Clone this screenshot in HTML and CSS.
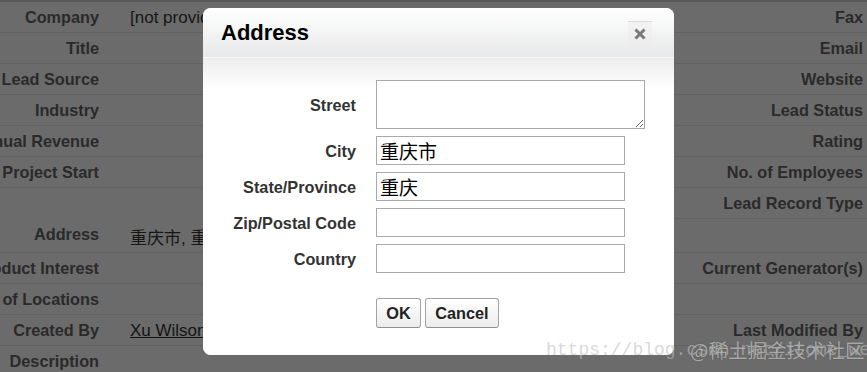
FILE: index.html
```html
<!DOCTYPE html>
<html>
<head>
<meta charset="utf-8">
<link rel="stylesheet" href="styles.css">
</head>
<body>
<div class="page">
  <div class="detail">
    <div class="lbl">Company</div><div class="val">[not provided]</div><div class="rlbl">Fax</div>
    <div class="lbl">Title</div><div class="val"></div><div class="rlbl">Email</div>
    <div class="lbl">Lead Source</div><div class="val"></div><div class="rlbl">Website</div>
    <div class="lbl">Industry</div><div class="val"></div><div class="rlbl">Lead Status</div>
    <div class="lbl">Annual Revenue</div><div class="val"></div><div class="rlbl">Rating</div>
    <div class="lbl">Project Start</div><div class="val"></div><div class="rlbl">No. of Employees</div>
    <div class="lbl nb"></div><div class="val nb"></div><div class="rlbl">Lead Record Type</div>
    <div class="lbl addr">Address</div><div class="val cjk">重庆市, 重庆</div><div class="rlbl"></div>
    <div class="lbl">Product Interest</div><div class="val"></div><div class="rlbl">Current Generator(s)</div>
    <div class="lbl">No. of Locations</div><div class="val"></div><div class="rlbl"></div>
    <div class="lbl">Created By</div><div class="val"><a class="link" href="#">Xu Wilson</a></div><div class="rlbl">Last Modified By</div>
    <div class="lbl">Description</div><div class="val"></div><div class="rlbl"></div>
  </div>

  <div class="dialog">
    <div class="dlg-head">
      <h2 class="dlg-title">Address</h2>
      <span class="dlg-close">
        <svg width="12" height="12" viewBox="0 0 12 12"><path d="M1.5 1.5 L10.5 10.5 M10.5 1.5 L1.5 10.5" stroke="#7a7a7a" stroke-width="3" stroke-linecap="butt"/></svg>
      </span>
    </div>
    <div class="dlg-body">
      <div class="form">
        <label class="flbl">Street</label><textarea class="ta"></textarea>
        <label class="flbl">City</label><input class="inp" type="text" value="重庆市">
        <label class="flbl">State/Province</label><input class="inp" type="text" value="重庆">
        <label class="flbl">Zip/Postal Code</label><input class="inp" type="text" value="">
        <label class="flbl">Country</label><input class="inp" type="text" value="">
        <div class="btns"><button class="btn ok">OK</button><button class="btn cancel">Cancel</button></div>
      </div>
    </div>
  </div>

  <div class="wm-url">https://blog.csdn.net/itome_web</div>
  <div class="wm-jj">@稀土掘金技术社区</div>
</div>
</body>
</html>
```
FILE: styles.css
```css
html, body {
  margin: 0;
  padding: 0;
  width: 867px;
  height: 372px;
  overflow: hidden;
  background: #6b6b6b;
}

.page {
  position: relative;
  width: 867px;
  height: 372px;
  overflow: hidden;
  font-family: "Liberation Sans", Arial, sans-serif;
}

.detail {
  display: grid;
  grid-template-columns: 110px 1fr 260px;
  grid-template-rows: repeat(7, 31px) 34px repeat(4, 31px);
  border-top: 2px solid #5a5a5a;
}

.lbl, .val, .rlbl {
  box-sizing: border-box;
  display: flex;
  align-items: center;
  padding-top: 1px;
  white-space: nowrap;
  border-bottom: 1px solid #626262;
  min-width: 0;
}

.lbl.nb, .val.nb { border-bottom-color: transparent; }

.lbl {
  justify-content: flex-end;
  padding-right: 11px;
  font-size: 16.25px;
  font-weight: bold;
  color: #2a2a2a;
}

.lbl.addr { padding-top: 0; padding-bottom: 3px; }

.rlbl {
  justify-content: flex-end;
  padding-right: 4px;
  font-size: 16.25px;
  font-weight: bold;
  color: #2a2a2a;
}

.val {
  padding-left: 20px;
  font-size: 17px;
  color: #161616;
  overflow: hidden;
}

.val.cjk {
  font-family: "Liberation Sans", "Noto Sans CJK SC", sans-serif;
  font-size: 17px;
  padding-top: 2px;
}

.link {
  color: #141414;
  text-decoration: underline;
}

/* dialog */
.dialog {
  position: absolute;
  left: 203px;
  top: 8px;
  width: 471px;
  height: 347px;
  background: #fff;
  border-radius: 8px;
  overflow: hidden;
}

.dlg-head {
  box-sizing: border-box;
  height: 50px;
  display: flex;
  align-items: center;
  justify-content: space-between;
  padding: 0 22px 0 18px;
  background: linear-gradient(#ffffff, #e7e8e9);
  border-bottom: 1px solid #f7f7f7;
}

.dlg-title {
  margin: 0;
  font-size: 22px;
  font-weight: bold;
  color: #000;
  line-height: 1;
  padding-top: 1px;
}

.dlg-close {
  box-sizing: border-box;
  width: 24px;
  height: 26px;
  margin-top: 2px;
  display: flex;
  align-items: center;
  justify-content: center;
  border-top: 1px solid #dcdcdc;
  background: linear-gradient(#f3f3f3, #ebebeb);
}

.dlg-body {
  background: linear-gradient(#ededed, #ffffff 32px);
  padding-top: 22px;
  height: 297px;
  box-sizing: border-box;
}

.form {
  display: grid;
  grid-template-columns: 153px auto;
  column-gap: 20px;
  row-gap: 7px;
  align-items: center;
  justify-items: start;
}

.flbl {
  justify-self: end;
  font-size: 16.25px;
  font-weight: bold;
  color: #333;
  white-space: nowrap;
  padding-top: 2px;
}

.ta {
  box-sizing: border-box;
  width: 269px;
  height: 49px;
  margin: 0;
  border: 1px solid #a9a9a9;
  padding: 2px 3px;
  font-size: 16px;
}

.inp {
  box-sizing: border-box;
  width: 249px;
  height: 29px;
  margin: 0;
  border: 1px solid #a9a9a9;
  padding: 0 3px;
  font-family: "Noto Sans CJK SC", sans-serif;
  font-size: 19px;
  color: #000;
  outline: none;
}

.btns {
  grid-column: 2;
  margin-top: 18px;
  display: flex;
  gap: 4px;
}

.btn {
  box-sizing: border-box;
  height: 30px;
  padding: 0;
  border: 1px solid #a3a3a3;
  border-bottom-color: #8f8f8f;
  border-radius: 3px;
  background: linear-gradient(#ffffff, #ececec);
  font-family: "Liberation Sans", Arial, sans-serif;
  font-size: 16.25px;
  font-weight: bold;
  color: #222;
}

.btn.ok { width: 45px; }
.btn.cancel { width: 74px; }

/* watermarks */
.wm-url {
  position: absolute;
  left: 546px;
  top: 340px;
  font-family: "Liberation Mono", monospace;
  font-size: 18px;
  color: rgba(190, 190, 190, 0.6);
  white-space: nowrap;
}

.wm-jj {
  position: absolute;
  left: 690px;
  top: 335px;
  font-family: "Noto Sans CJK SC", sans-serif;
  font-size: 19.5px;
  color: rgba(235, 235, 235, 0.6);
  text-shadow: 0 0 1px rgba(0, 0, 0, 0.45);
  white-space: nowrap;
}
```
